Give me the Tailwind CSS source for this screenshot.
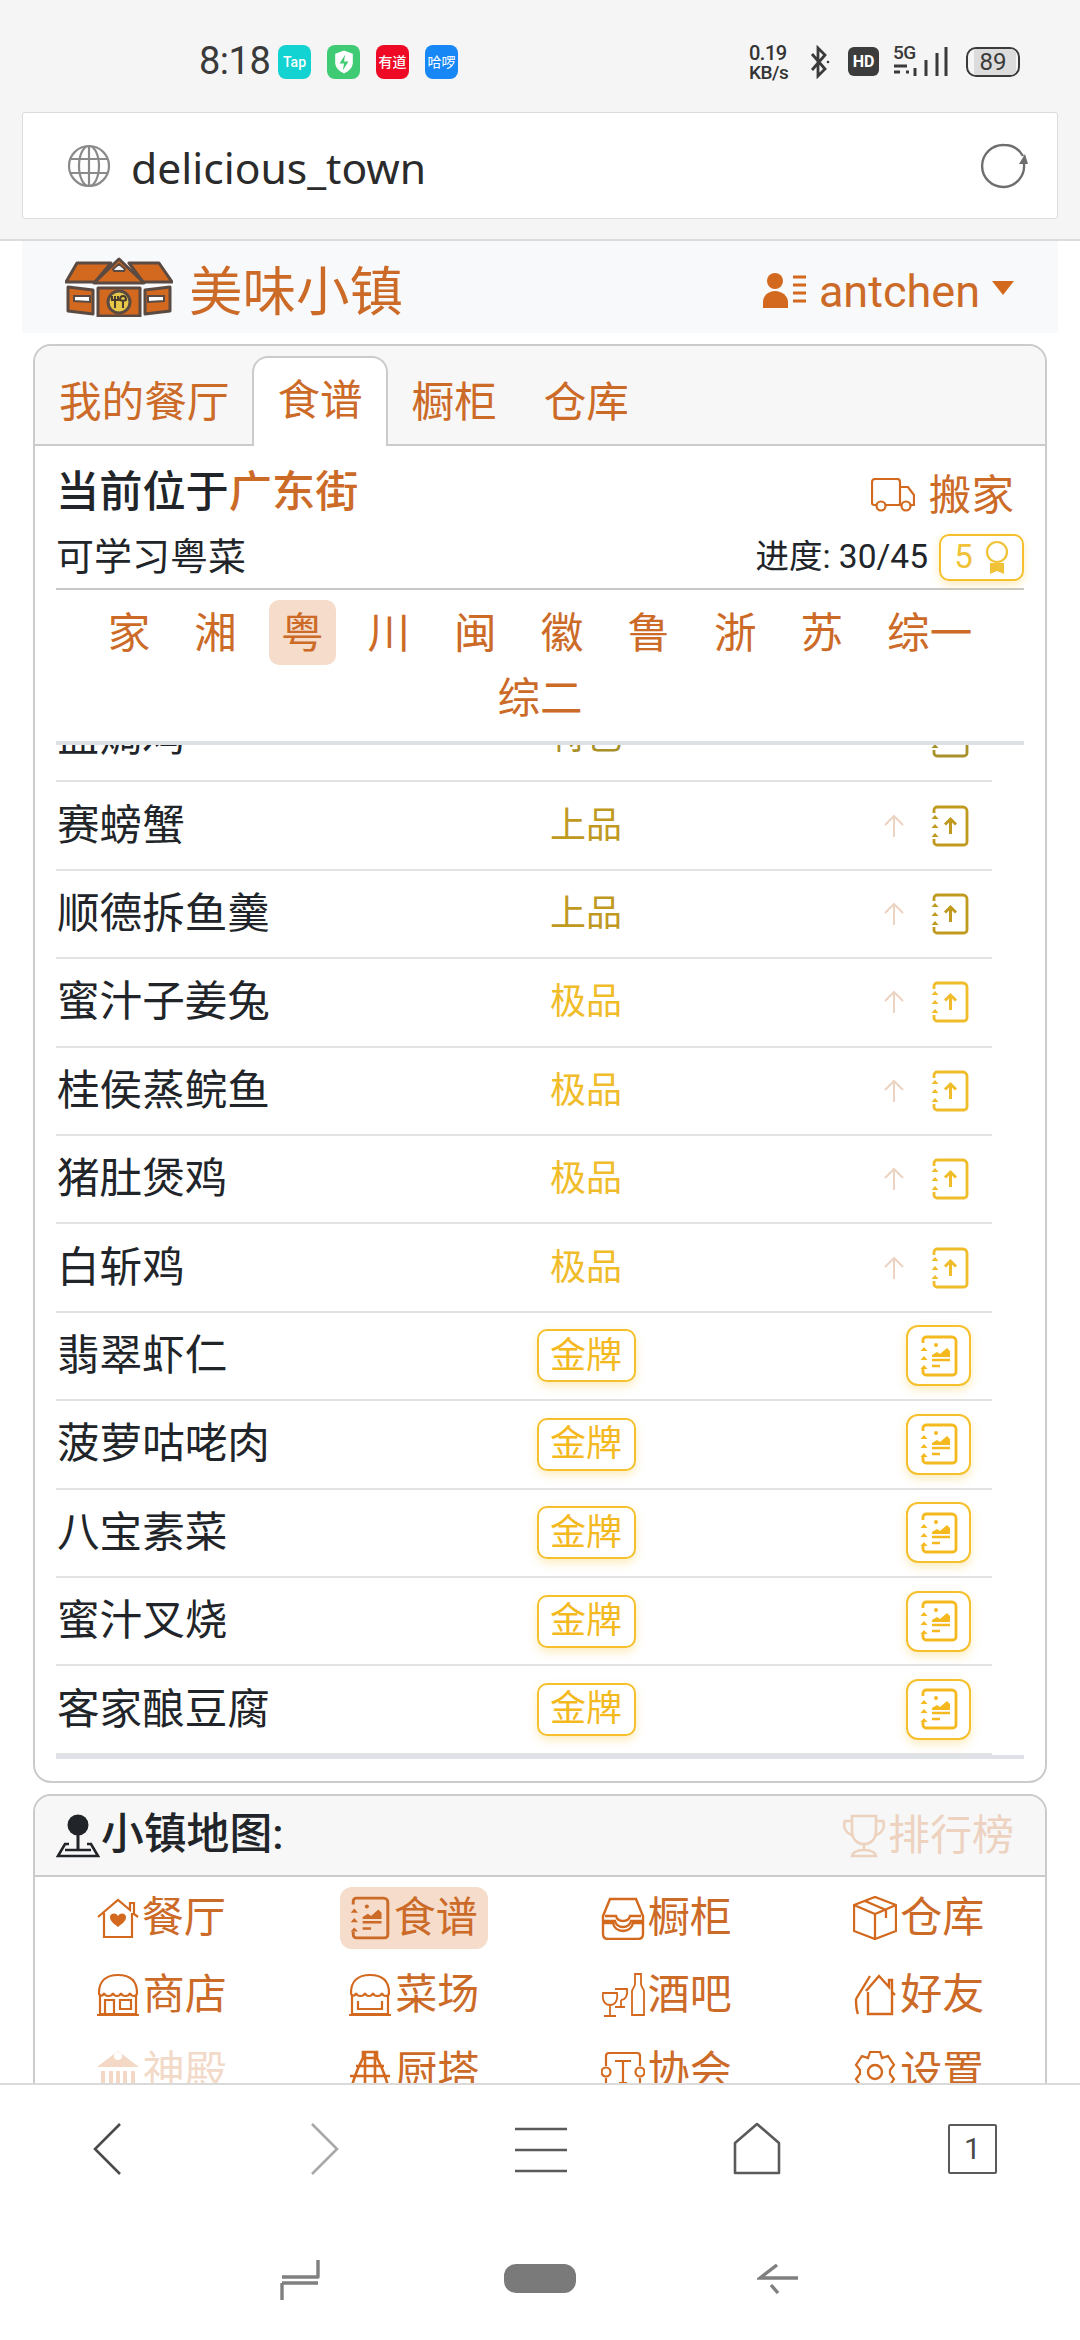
<!DOCTYPE html>
<html lang="zh">
<head>
<meta charset="utf-8">
<script src="https://cdn.jsdelivr.net/npm/@tailwindcss/browser@4"></script>
</head>
<body class="m-0 bg-white">
<svg width="0" height="0" class="absolute">
  <defs>
    <symbol id="up" viewBox="0 0 38 42">
      <path d="M3 8V5a3 3 0 0 1 3-3h26a4 4 0 0 1 4 4v31a3 3 0 0 1-3 3H6a3 3 0 0 1-3-3v-3" fill="none" stroke="currentColor" stroke-width="2.800"/>
      <path d="M4 10l3.500 4h-7zM4 19l3.500 4h-7zM4 28l3.500 4h-7z" fill="currentColor"/>
      <path d="M19.500 29V14M14 19.500l5.500-5.500 5.500 5.500" fill="none" stroke="currentColor" stroke-width="3"/>
    </symbol>
    <symbol id="book" viewBox="0 0 38 42">
      <path d="M3 8V5a3 3 0 0 1 3-3h26a4 4 0 0 1 4 4v31a3 3 0 0 1-3 3H6a3 3 0 0 1-3-3v-3" fill="none" stroke="currentColor" stroke-width="2.800"/>
      <path d="M4 12l3.500 4h-7zM4 21l3.500 4h-7zM4 30l3.500 4h-7z" fill="currentColor"/>
      <circle cx="16" cy="10" r="2" fill="currentColor"/>
      <path d="M12 20l5-3 3 2 7-6 3 3v6H12z" fill="currentColor"/>
      <path d="M12 25h18M12 31h8" fill="none" stroke="currentColor" stroke-width="2.400"/>
    </symbol>
  </defs>
</svg>
<div class="w-[1080px] h-[2340px] overflow-hidden flex flex-col bg-white text-[#212529] font-['Roboto','Noto_Sans_CJK_SC',sans-serif]">

  <!-- browser chrome -->
  <header class="h-[241px] shrink-0 bg-[#f5f5f5] border-b-2 border-[#dcdcdc] flex flex-col">
    <div class="h-[112px] shrink-0 relative">
      <div class="absolute left-[199px] top-[36px] text-[38px] leading-[50px] text-[#3a3a3a] tracking-[-0.5px]">8:18</div>
      <div class="absolute left-[278px] top-[45px] flex gap-[16px]">
        <div class="w-[33px] h-[34px] rounded-[8px] bg-[#12d2d2] text-white text-[14px] leading-[34px] text-center font-medium">Tap</div>
        <div class="w-[33px] h-[34px] rounded-[8px] bg-[#3fca74] flex items-center justify-center">
          <svg width="22" height="27" viewBox="0 0 20 24"><path d="M10 1l8 3v8c0 5-4 8-8 10-4-2-8-5-8-10V4z" fill="#fff"/><path d="M11 5l-5 8h4l-1 6 5-8h-4z" fill="#3fca74"/></svg>
        </div>
        <div class="w-[33px] h-[34px] rounded-[8px] bg-[#ee0a24] text-white text-[14px] leading-[34px] text-center font-medium">有道</div>
        <div class="w-[33px] h-[34px] rounded-[8px] bg-[#1787f5] text-white text-[14px] leading-[34px] text-center">哈啰</div>
      </div>
      <div class="absolute left-[749px] top-[44px] w-[48px] text-[#333] text-[20px] leading-[19px] font-medium tracking-[-0.5px]">0.19<br><span class="text-[19px]">KB/s</span></div>
      <svg class="absolute left-[807px] top-[45px]" width="24" height="34" viewBox="0 0 24 34"><path d="M5 9l13 15-7 7V3l7 7L5 25" fill="none" stroke="#3a3a3a" stroke-width="2.800"/><circle cx="21" cy="17" r="1.300" fill="#3a3a3a"/></svg>
      <div class="absolute left-[848px] top-[47px] w-[31px] h-[29px] rounded-[6px] bg-[#3c3c3c] text-white text-[16px] leading-[29px] text-center font-bold">HD</div>
      <div class="absolute left-[893px] top-[42px] text-[#3a3a3a] text-[19px] leading-[22px] font-medium tracking-[-0.5px]">5G</div>
      <svg class="absolute left-[893px] top-[47px]" width="58" height="30" viewBox="0 0 58 30">
        <path d="M1 19h13M1 25h6M13 25h3" stroke="#3a3a3a" stroke-width="3" fill="none"/>
        <path d="M25 21v8M36 13v16M47 6v23M56 0v29" transform="translate(-3 0)" stroke="#3a3a3a" stroke-width="3" fill="none"/>
      </svg>
      <div class="absolute left-[966px] top-[47px] w-[54px] h-[30px] rounded-[10px] border-2 border-[#3a3a3a] overflow-hidden flex items-center">
        <div class="absolute inset-y-0 left-[6px] w-[42px] bg-[#dcdcdc]"></div>
        <span class="relative w-full text-center text-[24px] leading-[26px] text-[#3a3a3a]">89</span>
      </div>
    </div>
    <div class="mx-[22px] h-[107px] shrink-0 bg-white border border-[#dcdcdc] rounded-[3px] flex items-center pl-[44px] pr-[27px]">
      <svg width="44" height="44" viewBox="0 0 44 44" class="shrink-0">
        <g fill="none" stroke="#8a8a8a" stroke-width="2.200"><circle cx="22" cy="22" r="20"/><ellipse cx="22" cy="22" rx="10" ry="20"/><path d="M22 2v40M3 15h38M3 29h38"/></g>
      </svg>
      <span class="ml-[20px] mt-[2px] text-[42.600px] leading-[56px] text-[#2b2b2b] font-['Noto_Sans','Noto_Sans_CJK_SC',sans-serif]">delicious_town</span>
      <svg class="ml-auto" width="50" height="46" viewBox="0 0 50 46"><path d="M44 21A21 21 0 1 1 24 2c9 0 15 4 19 11" fill="none" stroke="#6e6e6e" stroke-width="2.400"/><path d="M39 18l9 0-3-10z" transform="translate(0 3)" fill="#6e6e6e"/></svg>
    </div>
  </header>

  <main class="flex-1 min-h-0 overflow-hidden">
    <!-- site navbar -->
    <nav class="mx-[22px] h-[92px] bg-[#f8f9fa] flex items-center pl-[43px] pr-[44px] text-[#cc6a28]">
      <svg width="108" height="60" viewBox="0 0 108 60" class="shrink-0">
        <g stroke="#5a4a42" stroke-width="3" stroke-linejoin="round">
          <path d="M12 6h34L30 25H1z" fill="#d2691e"/>
          <path d="M64 6h30l13 19H78z" fill="#d2691e"/>
          <path d="M54 2l25 24H29z" fill="#d2691e"/>
          <path d="M3 30l25 3v24L3 54z" fill="#d2691e"/>
          <path d="M105 30l-25 3v24l25-3z" fill="#d2691e"/>
          <rect x="33" y="31" width="42" height="28" fill="#d2691e"/>
          <circle cx="54" cy="45" r="11" fill="#e5c84a"/>
        </g>
        <path d="M48 12l6-5 6 5-1 2H49z" fill="#eef2f5" stroke="#5a4a42" stroke-width="2"/>
        <path d="M9 39h16v6l-16-1zM99 39H83v6l16-1z" fill="#fff" stroke="#5a4a42" stroke-width="2"/>
        <path d="M50 39v12M47 39v4h6v-4M58 39c-2 0-3 2-3 4l3 1v7M58 39c2 0 3 2 3 4l-3 1" fill="none" stroke="#4a3a2c" stroke-width="2"/>
      </svg>
      <span class="ml-[16px] mt-[12px] text-[53.500px] leading-[60px]">美味小镇</span>
      <svg class="ml-auto mt-[6px] shrink-0" width="44" height="36" viewBox="0 0 44 36">
        <circle cx="12" cy="9" r="8" fill="#d2691e"/><path d="M0 36v-6c0-6 5-11 12-11s13 5 13 11v6z" fill="#d2691e"/>
        <path d="M30 5h13M30 13h13M30 21h13M30 29h13" stroke="#d2691e" stroke-width="3" fill="none"/>
      </svg>
      <span class="ml-[12px] mt-[9px] text-[45px] leading-[56px]">antchen</span>
      <svg class="ml-[12px] mt-[2px]" width="22" height="14" viewBox="0 0 22 14"><path d="M0 0h22L11 14z" fill="#d2691e"/></svg>
    </nav>

    <!-- recipes card -->
    <section class="mx-[33px] mt-[11px] h-[1439px] border-2 border-[#cbcbcb] rounded-[18px] overflow-hidden">
      <div class="h-[100px] bg-[#f7f7f7] border-b-2 border-[#cbcbcb] flex items-end text-[42.600px] leading-[56px] text-[#cc6a28]">
        <div class="px-[24px] h-[84px] flex items-center">我的餐厅</div>
        <div class="-ml-[1px] px-[23px] h-[90px] -mb-[2px] flex items-center pb-[4px] bg-white border-2 border-b-0 border-[#cbcbcb] rounded-t-[16px]">食谱</div>
        <div class="px-[24px] h-[84px] flex items-center">橱柜</div>
        <div class="-ml-[1px] px-[24px] h-[84px] flex items-center">仓库</div>
      </div>
      <div class="px-[21px]">
        <div class="h-[80px] flex items-center justify-between pr-[10px] pt-[12px]">
          <div class="mt-[2px] text-[43.200px] leading-[56px] font-medium">当前位于<span class="text-[#cc6a28]">广东街</span></div>
          <div class="mt-[6px] flex items-center text-[42.600px] leading-[56px] text-[#cc6a28]">
            <svg width="44" height="34" viewBox="0 0 44 34"><path d="M6 27H3a2 2 0 0 1-2-2V4a3 3 0 0 1 3-3h22a3 3 0 0 1 3 3v23H15M29 9h8l6 8v10h-4M29 27h2" fill="none" stroke="#d2691e" stroke-width="2.200"/><circle cx="10" cy="28" r="4.500" fill="none" stroke="#d2691e" stroke-width="2.200"/><circle cx="35" cy="28" r="4.500" fill="none" stroke="#d2691e" stroke-width="2.200"/></svg>
            <span class="ml-[14px]">搬家</span>
          </div>
        </div>
        <div class="h-[64px] border-b-2 border-[#c8c8c8] flex items-center justify-between">
          <div class="text-[38px] leading-[50px]">可学习粤菜</div>
          <div class="flex items-center text-[33.500px] leading-[44px]">
            <span>进度: 30/45</span>
            <div class="ml-[11px] w-[85px] h-[47px] border-2 border-[#f5c02b] rounded-[10px] shadow-[0_4px_8px_rgba(245,192,43,0.3)] flex items-center justify-center gap-[12px] text-[#f0c237] text-[33px]">
              <span>5</span>
              <svg width="24" height="36" viewBox="0 0 24 36"><circle cx="12" cy="13" r="10" fill="none" stroke="#f0c237" stroke-width="2.200"/><path d="M5 24v11l7-3 7 3V24z" fill="#f0c237"/></svg>
            </div>
          </div>
        </div>
        <div class="mt-[10px] h-[141px] flex flex-wrap justify-center content-start px-[20px] text-[42.600px] leading-[56px] text-[#cc6a28]">
          <div class="h-[65px] px-[12px] mx-[10px] rounded-[10px] flex items-center">家</div>
          <div class="h-[65px] px-[12px] mx-[10px] rounded-[10px] flex items-center">湘</div>
          <div class="h-[65px] px-[12px] mx-[10px] rounded-[10px] flex items-center bg-[#f5dccb]">粤</div>
          <div class="h-[65px] px-[12px] mx-[10px] rounded-[10px] flex items-center">川</div>
          <div class="h-[65px] px-[12px] mx-[10px] rounded-[10px] flex items-center">闽</div>
          <div class="h-[65px] px-[12px] mx-[10px] rounded-[10px] flex items-center">徽</div>
          <div class="h-[65px] px-[12px] mx-[10px] rounded-[10px] flex items-center">鲁</div>
          <div class="h-[65px] px-[12px] mx-[10px] rounded-[10px] flex items-center">浙</div>
          <div class="h-[65px] px-[12px] mx-[10px] rounded-[10px] flex items-center">苏</div>
          <div class="h-[65px] px-[12px] mx-[10px] rounded-[10px] flex items-center">综一</div>
          <div class="h-[65px] px-[12px] mx-[10px] rounded-[10px] flex items-center">综二</div>
        </div>
        <div class="h-[1018px] border-y-[4px] border-[#dee2e6] overflow-hidden">
          <div class="w-[936px] -mt-[51px] text-[42.600px]">
            <div class="h-[88.4px] border-b-2 border-[#e2e2e2] flex items-center"><div class="w-[430px] pl-[1px]">盐焗鸡</div><div class="w-[200px] text-center text-[36px] text-[#a8912a]">特色</div><div class="flex-1 flex items-center justify-end pr-[23px]"><svg width="38" height="42" class="text-[#a8912a]"><use href="#up"/></svg></div></div>
            <div class="h-[88.4px] border-b-2 border-[#e2e2e2] flex items-center"><div class="w-[430px] pl-[1px]">赛螃蟹</div><div class="w-[200px] text-center text-[36px] text-[#c0991f]">上品</div><div class="flex-1 flex items-center justify-end pr-[23px]"><svg class="mr-[27px] text-[#ecd3c2]" width="20" height="24" viewBox="0 0 20 24"><path d="M10 23V2M1 11l9-9 9 9" fill="none" stroke="currentColor" stroke-width="2"/></svg><svg width="38" height="42" class="text-[#c0991f]"><use href="#up"/></svg></div></div>
            <div class="h-[88.4px] border-b-2 border-[#e2e2e2] flex items-center"><div class="w-[430px] pl-[1px]">顺德拆鱼羹</div><div class="w-[200px] text-center text-[36px] text-[#c0991f]">上品</div><div class="flex-1 flex items-center justify-end pr-[23px]"><svg class="mr-[27px] text-[#ecd3c2]" width="20" height="24" viewBox="0 0 20 24"><path d="M10 23V2M1 11l9-9 9 9" fill="none" stroke="currentColor" stroke-width="2"/></svg><svg width="38" height="42" class="text-[#c0991f]"><use href="#up"/></svg></div></div>
            <div class="h-[88.4px] border-b-2 border-[#e2e2e2] flex items-center"><div class="w-[430px] pl-[1px]">蜜汁子姜兔</div><div class="w-[200px] text-center text-[36px] text-[#f0bc2a]">极品</div><div class="flex-1 flex items-center justify-end pr-[23px]"><svg class="mr-[27px] text-[#ecd3c2]" width="20" height="24" viewBox="0 0 20 24"><path d="M10 23V2M1 11l9-9 9 9" fill="none" stroke="currentColor" stroke-width="2"/></svg><svg width="38" height="42" class="text-[#f0bc2a]"><use href="#up"/></svg></div></div>
            <div class="h-[88.4px] border-b-2 border-[#e2e2e2] flex items-center"><div class="w-[430px] pl-[1px]">桂侯蒸鲩鱼</div><div class="w-[200px] text-center text-[36px] text-[#f0bc2a]">极品</div><div class="flex-1 flex items-center justify-end pr-[23px]"><svg class="mr-[27px] text-[#ecd3c2]" width="20" height="24" viewBox="0 0 20 24"><path d="M10 23V2M1 11l9-9 9 9" fill="none" stroke="currentColor" stroke-width="2"/></svg><svg width="38" height="42" class="text-[#f0bc2a]"><use href="#up"/></svg></div></div>
            <div class="h-[88.4px] border-b-2 border-[#e2e2e2] flex items-center"><div class="w-[430px] pl-[1px]">猪肚煲鸡</div><div class="w-[200px] text-center text-[36px] text-[#f0bc2a]">极品</div><div class="flex-1 flex items-center justify-end pr-[23px]"><svg class="mr-[27px] text-[#ecd3c2]" width="20" height="24" viewBox="0 0 20 24"><path d="M10 23V2M1 11l9-9 9 9" fill="none" stroke="currentColor" stroke-width="2"/></svg><svg width="38" height="42" class="text-[#f0bc2a]"><use href="#up"/></svg></div></div>
            <div class="h-[88.4px] border-b-2 border-[#e2e2e2] flex items-center"><div class="w-[430px] pl-[1px]">白斩鸡</div><div class="w-[200px] text-center text-[36px] text-[#f0bc2a]">极品</div><div class="flex-1 flex items-center justify-end pr-[23px]"><svg class="mr-[27px] text-[#ecd3c2]" width="20" height="24" viewBox="0 0 20 24"><path d="M10 23V2M1 11l9-9 9 9" fill="none" stroke="currentColor" stroke-width="2"/></svg><svg width="38" height="42" class="text-[#f0bc2a]"><use href="#up"/></svg></div></div>
            <div class="h-[88.4px] border-b-2 border-[#e2e2e2] flex items-center"><div class="w-[430px] pl-[1px]">翡翠虾仁</div><div class="w-[200px] flex justify-center"><div class="w-[99px] h-[53px] border-2 border-[#f5c02b] rounded-[10px] shadow-[0_4px_10px_rgba(245,192,43,0.3)] flex items-center justify-center text-[36px] text-[#f4b91f]">金牌</div></div><div class="flex-1 flex items-center justify-end pr-[21px]"><div class="w-[65px] h-[61px] border-2 border-[#f5c02b] rounded-[12px] shadow-[0_4px_10px_rgba(245,192,43,0.3)] flex items-center justify-center text-[#f4b91f]"><svg width="38" height="42"><use href="#book"/></svg></div></div></div>
            <div class="h-[88.4px] border-b-2 border-[#e2e2e2] flex items-center"><div class="w-[430px] pl-[1px]">菠萝咕咾肉</div><div class="w-[200px] flex justify-center"><div class="w-[99px] h-[53px] border-2 border-[#f5c02b] rounded-[10px] shadow-[0_4px_10px_rgba(245,192,43,0.3)] flex items-center justify-center text-[36px] text-[#f4b91f]">金牌</div></div><div class="flex-1 flex items-center justify-end pr-[21px]"><div class="w-[65px] h-[61px] border-2 border-[#f5c02b] rounded-[12px] shadow-[0_4px_10px_rgba(245,192,43,0.3)] flex items-center justify-center text-[#f4b91f]"><svg width="38" height="42"><use href="#book"/></svg></div></div></div>
            <div class="h-[88.4px] border-b-2 border-[#e2e2e2] flex items-center"><div class="w-[430px] pl-[1px]">八宝素菜</div><div class="w-[200px] flex justify-center"><div class="w-[99px] h-[53px] border-2 border-[#f5c02b] rounded-[10px] shadow-[0_4px_10px_rgba(245,192,43,0.3)] flex items-center justify-center text-[36px] text-[#f4b91f]">金牌</div></div><div class="flex-1 flex items-center justify-end pr-[21px]"><div class="w-[65px] h-[61px] border-2 border-[#f5c02b] rounded-[12px] shadow-[0_4px_10px_rgba(245,192,43,0.3)] flex items-center justify-center text-[#f4b91f]"><svg width="38" height="42"><use href="#book"/></svg></div></div></div>
            <div class="h-[88.4px] border-b-2 border-[#e2e2e2] flex items-center"><div class="w-[430px] pl-[1px]">蜜汁叉烧</div><div class="w-[200px] flex justify-center"><div class="w-[99px] h-[53px] border-2 border-[#f5c02b] rounded-[10px] shadow-[0_4px_10px_rgba(245,192,43,0.3)] flex items-center justify-center text-[36px] text-[#f4b91f]">金牌</div></div><div class="flex-1 flex items-center justify-end pr-[21px]"><div class="w-[65px] h-[61px] border-2 border-[#f5c02b] rounded-[12px] shadow-[0_4px_10px_rgba(245,192,43,0.3)] flex items-center justify-center text-[#f4b91f]"><svg width="38" height="42"><use href="#book"/></svg></div></div></div>
            <div class="h-[88.4px] border-b-2 border-[#e2e2e2] flex items-center"><div class="w-[430px] pl-[1px]">客家酿豆腐</div><div class="w-[200px] flex justify-center"><div class="w-[99px] h-[53px] border-2 border-[#f5c02b] rounded-[10px] shadow-[0_4px_10px_rgba(245,192,43,0.3)] flex items-center justify-center text-[36px] text-[#f4b91f]">金牌</div></div><div class="flex-1 flex items-center justify-end pr-[21px]"><div class="w-[65px] h-[61px] border-2 border-[#f5c02b] rounded-[12px] shadow-[0_4px_10px_rgba(245,192,43,0.3)] flex items-center justify-center text-[#f4b91f]"><svg width="38" height="42"><use href="#book"/></svg></div></div></div>
          </div>
        </div>
      </div>
    </section>

    <!-- map card -->
    <section class="mx-[33px] mt-[11px] h-[400px] border-2 border-[#cbcbcb] rounded-[18px] overflow-hidden">
      <div class="h-[81px] bg-[#f7f7f7] border-b-2 border-[#cbcbcb] flex items-center pl-[21px] pr-[31px] text-[42.800px] leading-[56px]">
        <svg width="44" height="44" viewBox="0 0 44 44" class="shrink-0"><circle cx="22" cy="11" r="10.500" fill="#212529"/><path d="M22 20v17" stroke="#212529" stroke-width="3"/><path d="M13 30H9L2 42h40l-7-12h-4M9 36h26" fill="none" stroke="#212529" stroke-width="2.600"/></svg>
        <span class="ml-[1px] -mt-[3px] font-medium">小镇地图:</span>
        <div class="ml-auto flex items-center opacity-25 text-[#d2691e] text-[42px]">
          <svg width="44" height="44" viewBox="0 0 44 44"><path d="M10 2h24v15c0 8-5 13-12 13S10 25 10 17zM10 7H3c-3 7 2 13 9 15M34 7h7c3 7-2 13-9 15M22 30v6M10 42c1-4 6-6 12-6s11 2 12 6z" fill="none" stroke="#d2691e" stroke-width="2.600"/></svg>
          <span class="ml-[2px]">排行榜</span>
        </div>
      </div>
      <div class="grid grid-cols-4 gap-y-[15px] pt-[10px] text-[42px] leading-[56px] text-[#cc6a28]">
        <div class="flex justify-center"><div class="h-[62px] px-[10px] rounded-[12px] flex items-center gap-[3px]"><svg width="42" height="40" viewBox="0 0 42 40" class="shrink-0"><path d="M1 19L21 2l12 10V5h4v11l4 3M7 15v24h28V15" fill="none" stroke="#d2691e" stroke-width="2.200"/><path d="M21 29c-5-4-8-6-8-10 0-4 6-5 8-1 2-4 8-3 8 1 0 4-3 6-8 10z" fill="#d2691e"/></svg><span>餐厅</span></div></div>
        <div class="flex justify-center"><div class="h-[62px] px-[10px] rounded-[12px] flex items-center gap-[4px] bg-[#f5dccb]"><svg width="40" height="44" class="shrink-0"><use href="#book"/></svg><span>食谱</span></div></div>
        <div class="flex justify-center"><div class="h-[62px] px-[10px] rounded-[12px] flex items-center gap-[3px]"><svg width="44" height="44" viewBox="0 0 44 44" class="shrink-0"><path d="M2 20l7-17h26l7 17v5H30c-1 4-4 6-8 6s-7-2-8-6H2zM2 27v11c0 3 2 5 5 5h30c3 0 5-2 5-5V27H32c-1 5-5 8-10 8s-9-3-10-8zM4 20h11c1 4 3 5 7 5s6-1 7-5h11" fill="none" stroke="#d2691e" stroke-width="2.400"/></svg><span>橱柜</span></div></div>
        <div class="flex justify-center"><div class="h-[62px] px-[10px] rounded-[12px] flex items-center gap-[3px]"><svg width="44" height="44" viewBox="0 0 44 44" class="shrink-0"><path d="M22 1l21 8v26L22 43 1 35V9zM1 9l21 9 21-9M22 18v25M12 5l21 9v8" fill="none" stroke="#d2691e" stroke-width="2.300"/></svg><span>仓库</span></div></div>

        <div class="flex justify-center"><div class="h-[62px] px-[10px] rounded-[12px] flex items-center gap-[3px]"><svg width="44" height="44" viewBox="0 0 44 44" class="shrink-0"><path d="M3 20C3 8 10 2 22 2s19 6 19 18c0 4-6 4-7 0-1 4-8 4-9 0-1 4-7 4-8 0-1 4-8 4-9 0-1 4-5 3-5 0zM4 22v19h36V22M1 42h42M9 40V27h9v13M24 27h11v9H24z" fill="none" stroke="#d2691e" stroke-width="2.200"/></svg><span>商店</span></div></div>
        <div class="flex justify-center"><div class="h-[62px] px-[10px] rounded-[12px] flex items-center gap-[3px]"><svg width="44" height="44" viewBox="0 0 44 44" class="shrink-0"><path d="M3 20C3 8 10 2 22 2s19 6 19 18c0 4-6 4-7 0-1 4-8 4-9 0-1 4-7 4-8 0-1 4-8 4-9 0-1 4-5 3-5 0zM4 22v19h36V22M1 42h42M10 28v8h24v-8" fill="none" stroke="#d2691e" stroke-width="2.200"/></svg><span>菜场</span></div></div>
        <div class="flex justify-center"><div class="h-[62px] px-[10px] rounded-[12px] flex items-center gap-[3px]"><svg width="44" height="44" viewBox="0 0 44 44" class="shrink-0"><path d="M2 20h14c1 8-2 12-7 12s-8-4-7-12zM9 32v11M3 43h12M14 16h12c1 7-2 11-6 11M20 27v7M14 34h10M31 42V18c0-2 3-4 3-7V1h6v10c0 3 3 5 3 7v24z" fill="none" stroke="#d2691e" stroke-width="1.800"/></svg><span>酒吧</span></div></div>
        <div class="flex justify-center"><div class="h-[62px] px-[10px] rounded-[12px] flex items-center gap-[3px]"><svg width="44" height="44" viewBox="0 0 44 44" class="shrink-0"><path d="M13 18L26 3l10 11V7h3v12l3 3M15 19v22h24V19M3 26L17 3M3 26c0 6 0 10 2 15" fill="none" stroke="#d2691e" stroke-width="2.400"/></svg><span>好友</span></div></div>

        <div class="flex justify-center opacity-25"><div class="h-[62px] px-[10px] rounded-[12px] flex items-center gap-[3px]"><svg width="44" height="44" viewBox="0 0 44 44" class="shrink-0"><path d="M22 1L1 17h42z" fill="#d2691e"/><circle cx="22" cy="6" r="4" fill="#fff"/><path d="M7 21v21M15 21v21M22 21v21M29 21v21M37 21v21" stroke="#d2691e" stroke-width="4" fill="none"/></svg><span>神殿</span></div></div>
        <div class="flex justify-center"><div class="h-[62px] px-[10px] rounded-[12px] flex items-center gap-[3px]"><svg width="44" height="44" viewBox="0 0 44 44" class="shrink-0"><path d="M15 8V2h14v6l4 8 4 10 5 16H2l5-16 4-10zM2 26h40M8 16h28M17 2v40M27 2v40M15 8h14" fill="none" stroke="#d2691e" stroke-width="2.600"/></svg><span>厨塔</span></div></div>
        <div class="flex justify-center"><div class="h-[62px] px-[10px] rounded-[12px] flex items-center gap-[3px]"><svg width="44" height="44" viewBox="0 0 44 44" class="shrink-0"><path d="M5 16V6c0-2 1-3 3-3h28c2 0 3 1 3 3v10M5 28v14M39 28v14M14 11h16M22 11v22M18 33h8" fill="none" stroke="#d2691e" stroke-width="2.200"/><circle cx="5" cy="22" r="4.500" fill="none" stroke="#d2691e" stroke-width="2.200"/><circle cx="39" cy="22" r="4.500" fill="none" stroke="#d2691e" stroke-width="2.200"/></svg><span>协会</span></div></div>
        <div class="flex justify-center"><div class="h-[62px] px-[10px] rounded-[12px] flex items-center gap-[3px]"><svg width="44" height="44" viewBox="0 0 44 44" class="shrink-0"><path d="M17 2h10l2 6 6-2 6 9-4 5v4l4 5-6 9-6-2-2 6H17l-2-6-6 2-6-9 4-5v-4l-4-5 6-9 6 2z" fill="none" stroke="#d2691e" stroke-width="2.200"/><circle cx="22" cy="22" r="7" fill="none" stroke="#d2691e" stroke-width="2.400"/></svg><span>设置</span></div></div>
      </div>
    </section>
  </main>

  <!-- browser bottom bar -->
  <footer class="h-[257px] shrink-0 bg-white border-t-2 border-[#dadada] relative">
    <div class="h-[101px] flex items-center relative">
      <svg class="absolute left-[92px] top-[38px]" width="30" height="52" viewBox="0 0 30 52"><path d="M28 1L3 26l25 25" fill="none" stroke="#4a4a4a" stroke-width="2.600"/></svg>
      <svg class="absolute left-[310px] top-[38px]" width="30" height="52" viewBox="0 0 30 52"><path d="M2 1l25 25L2 51" fill="none" stroke="#a8a8a8" stroke-width="2.600"/></svg>
      <svg class="absolute left-[515px] top-[42px]" width="52" height="46" viewBox="0 0 52 46"><path d="M0 2h52M0 23h52M0 44h52" fill="none" stroke="#5a5a5a" stroke-width="2.600"/></svg>
      <svg class="absolute left-[733px] top-[37px]" width="48" height="53" viewBox="0 0 48 53"><path d="M24 2L2 21v30h44V21z" fill="none" stroke="#5a5a5a" stroke-width="2.600" stroke-linejoin="round"/></svg>
      <div class="absolute left-[948px] top-[39px] w-[49px] h-[50px] border-2 border-[#5a5a5a] rounded-[2px] flex items-center justify-center text-[30px] leading-[36px] text-[#4a4a4a]">1</div>
    </div>
    <svg class="absolute left-[279px] top-[174px]" width="42" height="42" viewBox="0 0 42 42"><path d="M39 1v17H3M3 24h36M3 24v17" fill="none" stroke="#808080" stroke-width="3.400" stroke-linejoin="round"/></svg>
    <div class="absolute left-[504px] top-[179px] w-[72px] h-[29px] rounded-[12px] bg-[#7a7a7a]"></div>
    <svg class="absolute left-[757px] top-[179px]" width="42" height="30" viewBox="0 0 42 30"><path d="M41 14H3L20 1M14 21l7 8" fill="none" stroke="#808080" stroke-width="3.400"/></svg>
  </footer>
</div>
</body>
</html>
